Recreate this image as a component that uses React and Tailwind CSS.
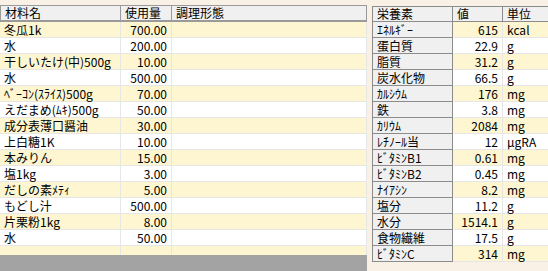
import React from "react";

const ingredients = [
  ["冬瓜1k", "700.00"],
  ["水", "200.00"],
  ["干しいたけ(中)500g", "10.00"],
  ["水", "500.00"],
  ["ﾍﾞｰｺﾝ(ｽﾗｲｽ)500g", "70.00"],
  ["えだまめ(ﾑｷ)500g", "50.00"],
  ["成分表薄口醤油", "30.00"],
  ["上白糖1K", "10.00"],
  ["本みりん", "15.00"],
  ["塩1kg", "3.00"],
  ["だしの素ﾒﾃｨ", "5.00"],
  ["もどし汁", "500.00"],
  ["片栗粉1kg", "8.00"],
  ["水", "50.00"],
  ["", ""],
];

const nutrients = [
  ["ｴﾈﾙｷﾞｰ", "615", "kcal"],
  ["蛋白質", "22.9", "g"],
  ["脂質", "31.2", "g"],
  ["炭水化物", "66.5", "g"],
  ["ｶﾙｼｳﾑ", "176", "mg"],
  ["鉄", "3.8", "mg"],
  ["ｶﾘｳﾑ", "2084", "mg"],
  ["ﾚﾁﾉｰﾙ当", "12", "μgRA"],
  ["ﾋﾞﾀﾐﾝB1", "0.61", "mg"],
  ["ﾋﾞﾀﾐﾝB2", "0.45", "mg"],
  ["ﾅｲｱｼﾝ", "8.2", "mg"],
  ["塩分", "11.2", "g"],
  ["水分", "1514.1", "g"],
  ["食物繊維", "17.5", "g"],
  ["ﾋﾞﾀﾐﾝC", "314", "mg"],
];

export default function App() {
  return (
    <div
      className="w-[548px] h-[271px] bg-[#f9f0e6] flex overflow-hidden text-[12px] leading-[15px] text-black"
      style={{ fontFamily: '"Noto Sans CJK JP", "Liberation Sans", sans-serif' }}
    >
      {/* ingredients grid */}
      <div className="w-[367px] flex flex-col pt-[5px]">
        <div className="flex h-[17px] leading-[14px] bg-[#f0f0f0] border-t border-b-2 border-l border-[#9a9a9a]">
          <div className="w-[120px] pl-1 border-r border-[#9a9a9a]">材料名</div>
          <div className="w-[51px] pl-1 border-r border-[#9a9a9a]">使用量</div>
          <div className="flex-1 pl-1 border-r border-[#9a9a9a]">調理形態</div>
        </div>
        <div className="h-[233px] overflow-hidden">
          {ingredients.map(([name, qty], i) => (
            <div
              key={i}
              className={`flex h-4 border-b border-[#e6e6e6] ${i % 2 === 0 ? "bg-[#fdf6d0]" : "bg-white"}`}
            >
              <div className="w-[121px] pl-1 whitespace-nowrap border-r border-[#e6e6e6]">{name}</div>
              <div className="w-[51px] pr-1 text-right border-r border-[#e6e6e6]">{qty}</div>
              <div className="flex-1 border-r border-[#e6e6e6]"></div>
            </div>
          ))}
        </div>
        <div className="flex-1 bg-[#a3a3a3]"></div>
      </div>

      {/* nutrients grid */}
      <div className="ml-[5px] flex-1 pt-[6px]">
        <div className="border-l border-[#8c8c8c]">
          <div className="flex h-4 leading-[14px] bg-[#f0f0f0] border-t border-b border-[#8c8c8c]">
            <div className="w-[80px] pl-1 border-r border-[#8c8c8c]">栄養素</div>
            <div className="w-[50px] pl-1 border-r border-[#8c8c8c]">値</div>
            <div className="flex-1 pl-1">単位</div>
          </div>
          {nutrients.map(([name, val, unit], i) => {
            const bg = i % 2 === 0 ? "bg-[#fdf6d0]" : "bg-white";
            return (
              <div key={name} className="flex h-4">
                <div className="w-[80px] pl-1 bg-[#f0f0f0] border-b border-r border-[#8c8c8c] whitespace-nowrap">
                  {name}
                </div>
                <div className={`w-[50px] pr-1 text-right border-b border-r border-[#e6e6e6] ${bg}`}>{val}</div>
                <div className={`flex-1 pl-1 border-b border-[#e6e6e6] ${bg}`}>{unit}</div>
              </div>
            );
          })}
        </div>
      </div>
    </div>
  );
}
